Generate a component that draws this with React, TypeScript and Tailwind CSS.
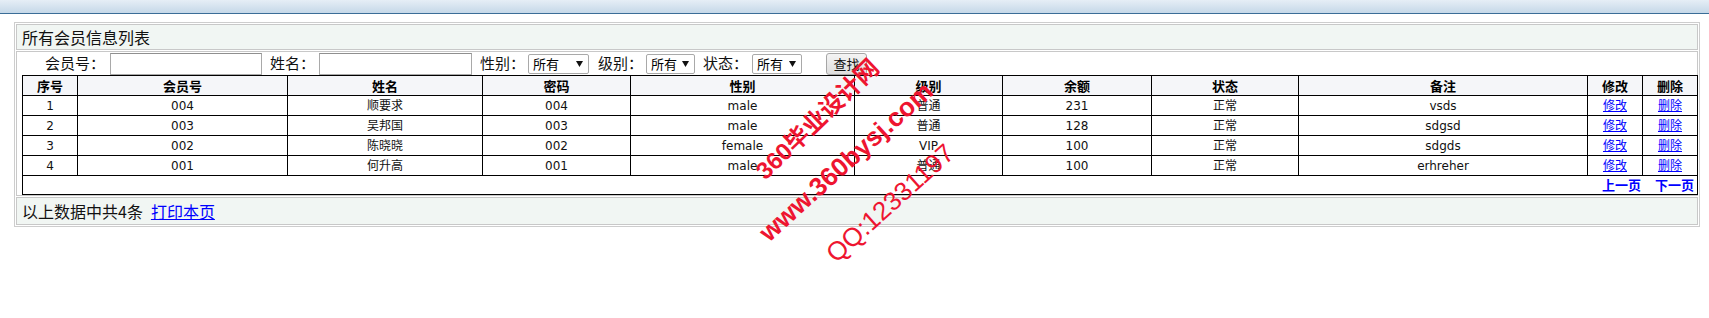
import React from "react";

const headers = ["序号", "会员号", "姓名", "密码", "性别", "级别", "余额", "状态", "备注", "修改", "删除"];
const colW = [
  "w-[55px]",
  "w-[210px]",
  "w-[195px]",
  "w-[148px]",
  "w-[224px]",
  "w-[148px]",
  "w-[149px]",
  "w-[147px]",
  "w-[289px]",
  "w-[55px]",
  "w-[55px]",
];

const rows = [
  ["1", "004", "顺要求", "004", "male", "普通", "231", "正常", "vsds"],
  ["2", "003", "吴邦国", "003", "male", "普通", "128", "正常", "sdgsd"],
  ["3", "002", "陈晓晓", "002", "female", "VIP", "100", "正常", "sdgds"],
  ["4", "001", "何升高", "001", "male", "普通", "100", "正常", "erhreher"],
];

function Select({ w }: { w: string }) {
  return (
    <div
      className={`${w} mt-[2px] h-[20px] border border-[#a9a9a9] rounded-[2px] bg-white flex items-center justify-between pl-[4px] pr-[5px] text-[13px] leading-[18px] text-black`}
    >
      <span>所有</span>
      <svg width="7" height="6" viewBox="0 0 7 6">
        <path d="M0 0 L7 0 L3.5 6 Z" fill="#111" />
      </svg>
    </div>
  );
}

export default function App() {
  return (
    <div className="relative w-[1709px] h-[318px] bg-white overflow-hidden font-['DejaVu_Sans','Noto_Sans_CJK_SC',sans-serif] text-black">
      <div className="h-[14px] bg-gradient-to-b from-[#e6eef6] to-[#c5d8e8] border-b border-[#3a6d97]" />
      <div className="mt-[8px] ml-[14px] w-[1686px] border border-[#cdcdcd] p-[1px] flex flex-col gap-[1px]">
        <div className="h-[26px] border border-[#c8c8c8] bg-[#f1f6f3] flex items-center pl-[5px] text-[16px] leading-[20px] font-['Noto_Sans_CJK_SC',sans-serif] text-[#111]">
          所有会员信息列表
        </div>
        <div className="border border-[#c8c8c8] bg-white pl-[5px] pb-0">
          <div className="h-[23px] flex items-start text-[15px] leading-[22px] font-['Noto_Sans_CJK_SC',sans-serif] text-[#111]">
            <span className="ml-[23px] w-[65px]">会员号：</span>
            <div className="mt-[1px] h-[22px] w-[152px] border border-[#a9a9a9] border-t-[#8f8f8f] bg-white" />
            <span className="ml-[8px] w-[49px]">姓名：</span>
            <div className="mt-[1px] h-[22px] w-[153px] border border-[#a9a9a9] border-t-[#8f8f8f] bg-white" />
            <span className="ml-[8px] w-[48px]">性别：</span>
            <Select w="w-[61px]" />
            <span className="ml-[9px] w-[48px]">级别：</span>
            <Select w="w-[49px]" />
            <span className="ml-[8px] w-[49px]">状态：</span>
            <Select w="w-[50px]" />
            <div className="ml-[24px] mt-[1px] h-[22px] w-[41px] border border-[#a6a6a6] rounded-[3px] bg-gradient-to-b from-[#f4f4f4] to-[#dedede] flex items-center justify-center text-[13px] leading-[16px] text-[#111]">
              查找
            </div>
          </div>
          <table className="w-full table-fixed border-collapse border border-black">
            <colgroup>
              {colW.map((c, i) => (
                <col key={i} className={c} />
              ))}
            </colgroup>
            <thead>
              <tr className="h-[20px] bg-[#f5f6f9]">
                {headers.map((h) => (
                  <th
                    key={h}
                    className="border border-black p-0 text-center text-[13px] leading-[18px] font-bold font-['Noto_Sans_CJK_SC',sans-serif]"
                  >
                    {h}
                  </th>
                ))}
              </tr>
            </thead>
            <tbody>
              {rows.map((r) => (
                <tr key={r[0]} className="h-[20px]">
                  {r.map((v, i) => (
                    <td
                      key={i}
                      className="border border-black p-0 text-center text-[12px] leading-[18px] text-[#111]"
                    >
                      {v}
                    </td>
                  ))}
                  <td className="border border-black p-0 text-center text-[12px] leading-[18px]">
                    <a href="#" className="text-[#0000ff] underline">
                      修改
                    </a>
                  </td>
                  <td className="border border-black p-0 text-center text-[12px] leading-[18px]">
                    <a href="#" className="text-[#0000ff] underline">
                      删除
                    </a>
                  </td>
                </tr>
              ))}
              <tr className="h-[19px]">
                <td colSpan={11} className="border border-black p-0 pr-[3px] text-right text-[13px] leading-[18px] font-bold font-['Noto_Sans_CJK_SC',sans-serif]">
                  <a href="#" className="text-[#0000ff]">
                    上一页
                  </a>
                  <a href="#" className="ml-[14px] text-[#0000ff]">
                    下一页
                  </a>
                </td>
              </tr>
            </tbody>
          </table>
        </div>
        <div className="h-[28px] border border-[#c8c8c8] bg-[#f1f6f3] flex items-center pl-[5px] text-[16px] leading-[20px] font-['Noto_Sans_CJK_SC',sans-serif] text-[#111]">
          <span>以上数据中共4条</span>
          <a href="#" className="ml-[8px] text-[#0000ff] underline">
            打印本页
          </a>
        </div>
      </div>

      <div className="absolute left-[760px] top-[160px] h-[30px] leading-[30px] whitespace-nowrap origin-left rotate-[-44deg] text-[24px] font-bold text-[#ee1530] font-['Liberation_Sans','Noto_Sans_CJK_SC',sans-serif]">
        360毕业设计网
      </div>
      <div className="absolute left-[763px] top-[221px] h-[30px] leading-[30px] whitespace-nowrap origin-left rotate-[-42deg] text-[26px] font-bold text-[#ee1530] font-['Liberation_Sans',sans-serif]">
        www.360bysj.com
      </div>
      <div className="absolute left-[830px] top-[242px] h-[30px] leading-[30px] whitespace-nowrap origin-left rotate-[-42deg] text-[26px] text-[#ee1530] font-['Liberation_Sans',sans-serif]">
        QQ:12331197
      </div>
    </div>
  );
}
